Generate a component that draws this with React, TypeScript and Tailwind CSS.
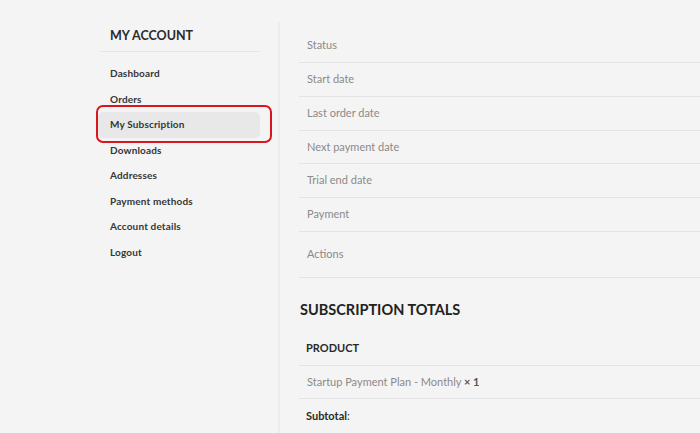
import React from "react";

const menu = [
  "Dashboard",
  "Orders",
  "My Subscription",
  "Downloads",
  "Addresses",
  "Payment methods",
  "Account details",
  "Logout",
];

const rows: { label: string; h: string }[] = [
  { label: "Status", h: "h-[34px]" },
  { label: "Start date", h: "h-[34px]" },
  { label: "Last order date", h: "h-[34px]" },
  { label: "Next payment date", h: "h-[33px]" },
  { label: "Trial end date", h: "h-[34px]" },
  { label: "Payment", h: "h-[34px]" },
  { label: "Actions", h: "h-[46px]" },
];

export default function App() {
  return (
    <div
      className="w-[700px] h-[433px] overflow-hidden bg-[#f4f4f4] flex"
      style={{ fontFamily: "Lato, 'Noto Sans', sans-serif" }}
    >
      <aside className="relative ml-[98px] w-[164px] pt-[28px] shrink-0">
        <div className="mx-[2px] pl-[10px] pb-[7px] border-b border-[#e6e6e6] text-[12.5px] leading-[16px] font-bold text-[#2a2a2a]">
          MY ACCOUNT
        </div>
        <nav className="mt-[9px] w-[162px] flex flex-col">
          {menu.map((m) => (
            <div
              key={m}
              className={
                m === "My Subscription"
                  ? "h-[25.5px] flex items-center pl-[12px] rounded-[5px] bg-[#e8e8e8] text-[10px] font-bold text-[#363636] tracking-[0.15px]"
                  : "h-[25.5px] flex items-center pl-[12px] text-[10px] font-bold text-[#363636] tracking-[0.15px]"
              }
            >
              {m}
            </div>
          ))}
        </nav>
        <div className="absolute left-[-2px] top-[105px] w-[176px] h-[38px] border-2 border-[#d8161d] rounded-[7px]" />
      </aside>
      <main className="ml-[16px] mt-[22px] border-l-2 border-[#ececec] pl-[19px] pt-[7px] flex-1">
        <div className="flex flex-col">
          {rows.map((r) => (
            <div
              key={r.label}
              className={`${r.h} flex items-center pl-[8px] border-b border-[#e4e4e4] text-[11px] text-[#8a8a8a]`}
            >
              {r.label}
            </div>
          ))}
        </div>
        <h2 className="mt-[22px] pl-[1px] text-[14.5px] leading-[20px] font-bold text-[#222]">
          SUBSCRIPTION TOTALS
        </h2>
        <div className="mt-[11px] h-[35px] flex items-center pl-[7px] border-b border-[#e4e4e4] text-[11px] font-bold text-[#2a2a2a]">
          PRODUCT
        </div>
        <div className="h-[33px] flex items-center pl-[8px] border-b border-[#e4e4e4] text-[11px] text-[#8a8a8a]">
          Startup Payment Plan - Monthly&nbsp;<span className="font-bold text-[#555]">× 1</span>
        </div>
        <div className="h-[34px] flex items-center pl-[7px] text-[11px] font-bold text-[#2a2a2a]">
          Subtotal<span className="font-normal">:</span>
        </div>
      </main>
    </div>
  );
}
